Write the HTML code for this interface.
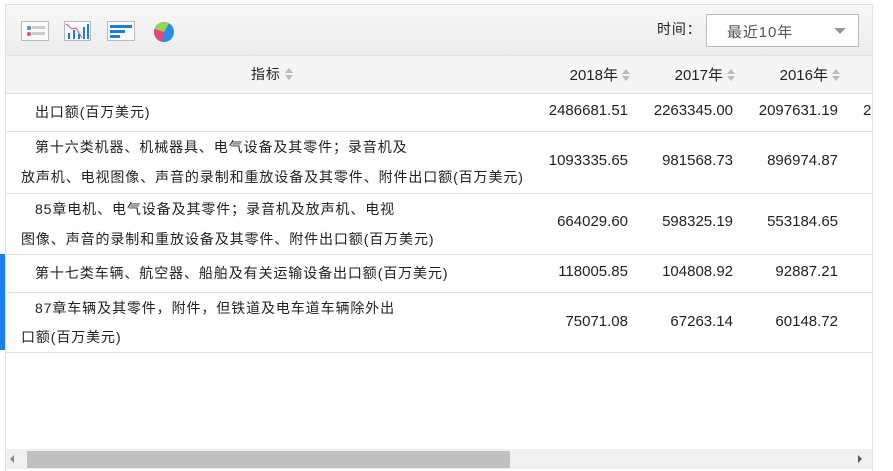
<!DOCTYPE html><html><head><meta charset="utf-8"><style>
body{margin:0;width:893px;height:471px;background:#fff;font-family:"Liberation Sans","Noto Sans CJK SC",sans-serif;font-size:14px;color:#222;position:relative;overflow:hidden}
.box{position:absolute;left:5px;top:4px;width:866px;height:466px;border:1px solid #e0e0e0;border-bottom:none;overflow:hidden}
.tb{position:absolute;left:0;top:0;width:866px;height:50px;background:linear-gradient(#f7f7f7,#ececec);border-bottom:1px solid #e3e3e3}
.hd{position:absolute;left:0;top:51px;width:866px;height:37px;background:#f5f5f5;border-bottom:1px solid #e3e3e3}
.row{position:absolute;left:0;width:866px;border-bottom:1px solid #e3e3e3}
.c{position:absolute;white-space:nowrap;letter-spacing:0.9px}
.n{text-align:right;font-size:15px;letter-spacing:0}
.s{display:inline-block;width:8px;height:12px;margin-left:4px;vertical-align:-1px;position:relative}
.s:before{content:"";position:absolute;left:0;top:0;border:4px solid transparent;border-bottom:5px solid #bbb;border-top:0}
.s:after{content:"";position:absolute;left:0;top:7px;border:4px solid transparent;border-top:5px solid #bbb;border-bottom:0}
</style></head><body>
<div class="box">
<div class="tb">
<svg style="position:absolute;left:15px;top:16px" width="28" height="20"><rect x=".5" y=".5" width="27" height="19" fill="#fafafa" stroke="#bbb"/><circle cx="8" cy="7" r="2" fill="#3a8ee6"/><circle cx="8" cy="13" r="2" fill="#e8457a"/><rect x="11" y="5" width="13" height="3" fill="#ccc"/><rect x="11" y="11" width="13" height="3" fill="#ccc"/></svg>
<svg style="position:absolute;left:58px;top:16px" width="27" height="20"><rect x=".5" y=".5" width="26" height="19" fill="#fafafa" stroke="#bbb"/><rect x="4" y="12" width="2" height="6" fill="#1a7ed6"/><rect x="9" y="9" width="2" height="9" fill="#1a7ed6"/><rect x="14" y="13" width="2" height="5" fill="#1a7ed6"/><rect x="19" y="6" width="2" height="12" fill="#1a7ed6"/><rect x="23" y="3" width="2" height="15" fill="#1a7ed6"/><polyline points="2,3 8,8 12,7 18,17" fill="none" stroke="#e8457a" stroke-width="1"/></svg>
<svg style="position:absolute;left:101px;top:16px" width="28" height="20"><rect x=".5" y=".5" width="27" height="19" fill="#fafafa" stroke="#bbb"/><rect x="3" y="4" width="22" height="3" fill="#1a7ed6"/><rect x="3" y="9" width="15" height="3" fill="#1a7ed6"/><rect x="3" y="14" width="10" height="3" fill="#1a7ed6"/></svg>
<svg style="position:absolute;left:147px;top:16px" width="22" height="22"><circle cx="11" cy="11" r="10" fill="#2a8de0"/><path d="M11 11L1.5 8A10 10 0 0 1 16 2.5Z" fill="#9bd54a"/><path d="M11 11L1.5 8A10 10 0 0 0 9 20.8Z" fill="#e8457a"/></svg>
<span class="c" style="left:651px;top:14px">时间：</span>
<div style="position:absolute;left:700px;top:9px;width:151px;height:31px;border:1px solid #bbb;background:#fff"><span class="c" style="left:20px;top:6px;color:#555;font-size:15px">最近10年</span><span style="position:absolute;right:12px;top:13px;border:6px solid transparent;border-top:6px solid #999;border-bottom:0"></span></div>
</div>
<div class="hd">
<span class="c" style="left:245px;top:8px">指标<i class="s"></i></span>
<span class="c n" style="right:242px;top:8px">2018年<i class="s"></i></span>
<span class="c n" style="right:137px;top:8px">2017年<i class="s"></i></span>
<span class="c n" style="right:32px;top:8px">2016年<i class="s"></i></span>
</div>
<div class="row" style="top:89px;height:37px"><span class="c" style="left:29px;top:8px">出口额(百万美元)</span><span class="c n" style="right:244px;top:8px">2486681.51</span><span class="c n" style="right:139px;top:8px">2263345.00</span><span class="c n" style="right:34px;top:8px">2097631.19</span><span class="c n" style="left:857px;top:8px">2</span></div>
<div class="row" style="top:127px;height:61px"><span class="c" style="left:29px;top:5px">第十六类机器、机械器具、电气设备及其零件；录音机及</span><span class="c" style="left:15px;top:35px">放声机、电视图像、声音的录制和重放设备及其零件、附件出口额(百万美元)</span><span class="c n" style="right:244px;top:20px">1093335.65</span><span class="c n" style="right:139px;top:20px">981568.73</span><span class="c n" style="right:34px;top:20px">896974.87</span></div>
<div class="row" style="top:189px;height:60px"><span class="c" style="left:29px;top:5px">85章电机、电气设备及其零件；录音机及放声机、电视</span><span class="c" style="left:15px;top:35px">图像、声音的录制和重放设备及其零件、附件出口额(百万美元)</span><span class="c n" style="right:244px;top:19px">664029.60</span><span class="c n" style="right:139px;top:19px">598325.19</span><span class="c n" style="right:34px;top:19px">553184.65</span></div>
<div class="row" style="top:250px;height:37px"><span class="c" style="left:29px;top:8px">第十七类车辆、航空器、船舶及有关运输设备出口额(百万美元)</span><span class="c n" style="right:244px;top:8px">118005.85</span><span class="c n" style="right:139px;top:8px">104808.92</span><span class="c n" style="right:34px;top:8px">92887.21</span></div>
<div class="row" style="top:288px;height:59px"><span class="c" style="left:29px;top:5px">87章车辆及其零件，附件，但铁道及电车道车辆除外出</span><span class="c" style="left:15px;top:34px">口额(百万美元)</span><span class="c n" style="right:244px;top:20px">75071.08</span><span class="c n" style="right:139px;top:20px">67263.14</span><span class="c n" style="right:34px;top:20px">60148.72</span></div>
<div style="position:absolute;left:0;top:444px;width:866px;height:20px;background:#f0f0f0">
<span style="position:absolute;left:4px;top:6px;border:4px solid transparent;border-right:4px solid #888;border-left:0"></span>
<div style="position:absolute;left:21px;top:2px;width:483px;height:17px;background:#c0c0c0"></div>
<span style="position:absolute;left:852px;top:6px;border:4px solid transparent;border-left:4px solid #555;border-right:0"></span>
</div>
</div>
<div style="position:absolute;left:0;top:254px;width:5px;height:96px;background:#1a7ef0"></div>
</body></html>
